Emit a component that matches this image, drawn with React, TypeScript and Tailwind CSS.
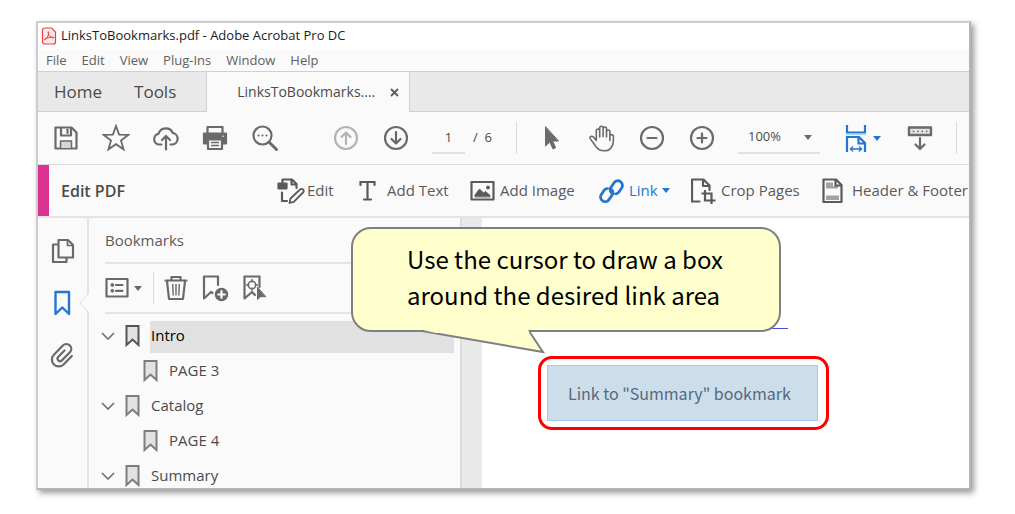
import { ReactNode } from "react";

type IconProps = {
    children: ReactNode,
    className?: string
}

type IconButtonProps = {
    label: string,
    className: string,
    children: ReactNode
}

type ToolProps = {
    label: string,
    icon: ReactNode,
    className: string,
    menu?: boolean
}

type Bookmark = {
    title: string,
    level: number,
    selected?: boolean
}

const menus = ["File", "Edit", "View", "Plug-Ins", "Window", "Help"];

const bookmarks: Bookmark[] = [
    { title: "Intro", level: 0, selected: true },
    { title: "PAGE 3", level: 1 },
    { title: "Catalog", level: 0 },
    { title: "PAGE 4", level: 1 },
    { title: "Summary", level: 0 },
];

// all icons are drawn on a 28 x 28 grid
const Icon = ({ children, className = "" }: IconProps) => (
    <svg viewBox="0 0 28 28" className={"size-7 shrink-0 " + className} fill="none" stroke="currentColor"
        strokeWidth="2.2" strokeLinecap="round" strokeLinejoin="round" aria-hidden="true">
        {children}
    </svg>
);

const Caret = ({ className = "" }: { className?: string }) => (
    <svg viewBox="0 0 8 5" className={"w-2 h-[5px] shrink-0 " + className} fill="currentColor" aria-hidden="true">
        <path d="M0 0h8L4 5z" />
    </svg>
);

const SaveIcon = () => (
    <Icon>
        <path d="M3.5 3.5h16l5 5v16h-21z" />
        <path d="M9 4v7.500h10V4" />
        <path d="M15.500 5.500v3.500" />
        <path d="M8.500 24v-7h11v7" fill="#d6d6d6" strokeWidth="1.500" />
    </Icon>
);

const StarIcon = () => (
    <Icon>
        <path d="M14 2l3.100 8.600 9.100.300-7.200 5.600 2.600 8.800L14 20.200l-7.600 5.100L9 16.500 1.800 10.900l9.100-.300z"
            strokeWidth="1.800" strokeLinejoin="miter" />
    </Icon>
);

const CloudIcon = () => (
    <Icon>
        <path d="M9.500 20.500H7.500a5.400 5.400 0 0 1-1-10.700A7.600 7.600 0 0 1 20.800 9a5.800 5.800 0 0 1-.500 11.500h-1.800" />
        <path d="M14 25.500V12.500M10 16l4-4 4 4" />
    </Icon>
);

const PrintIcon = () => (
    <Icon>
        <path d="M6.500 9V3h15v6" />
        <path d="M3 9.500h22v10h-3V16H6v3.500H3z" fill="currentColor" />
        <path d="M7 15.500h14v9.500H7z" fill="#fafafa" />
        <path d="M10.500 18.500h7M10.500 21.500h7" strokeWidth="1.300" />
        <path d="M22 12.200h.010" stroke="#fafafa" strokeWidth="1.500" />
    </Icon>
);

const SearchIcon = () => (
    <Icon>
        <circle cx="11.500" cy="11.500" r="9" />
        <path d="M18.200 18.200l7.300 7.300" strokeWidth="3" />
        <path d="M7.500 11.500h.010M11.500 11.500h.010M15.500 11.500h.010" />
    </Icon>
);

const UpIcon = () => (
    <Icon>
        <circle cx="14" cy="14" r="11" />
        <path d="M14 20V8.500M9.500 13L14 8.500l4.500 4.500" />
    </Icon>
);

const DownIcon = () => (
    <Icon>
        <circle cx="14" cy="14" r="11" />
        <path d="M14 8v11.500M9.500 15l4.500 4.500 4.500-4.500" />
    </Icon>
);

const PointerIcon = () => (
    <Icon>
        <path d="M7.500 3v19l4.300-4 3.200 7 2.600-1.200-3-6.800h5.600z" fill="currentColor" strokeWidth="1" />
    </Icon>
);

const HandIcon = () => (
    <Icon>
        <path d="M8.300 16.500V6.700a1.700 1.700 0 0 1 3.400 0V13 M11.700 12V3.900a1.700 1.700 0 0 1 3.400 0V12.500 M15.100 12V4.700a1.700 1.700 0 0 1 3.400 0V13 M18.500 13V7.700a1.700 1.700 0 0 1 3.400 0V16.500 M21.900 15.500V12a1.800 1.800 0 0 1 3.500 0v4.500c0 6-3.400 10.300-9.200 10.300-5 0-7.400-2.500-9.200-5.500l-4.800-6.700c-.9-1.700 1.300-3.200 3-1.800l3.100 3.700"
            strokeWidth="1.600" />
    </Icon>
);

const MinusIcon = () => (
    <Icon>
        <circle cx="14" cy="14" r="11" />
        <path d="M9.500 14h9" />
    </Icon>
);

const PlusIcon = () => (
    <Icon>
        <circle cx="14" cy="14" r="11" />
        <path d="M9.500 14h9M14 9.500v9" />
    </Icon>
);

const FitIcon = () => (
    <Icon>
        <path d="M5 1v7.500h18V1" strokeLinecap="butt" strokeLinejoin="miter" />
        <path d="M4 10.500h20" stroke="#b5d3f0" strokeWidth="1.500" strokeLinecap="butt" />
        <path d="M5 28V13h12l6 6v9M16.500 13v6.500H23" strokeLinecap="butt" strokeLinejoin="miter" />
        <path d="M9 25h10" strokeWidth="1.500" />
        <path d="M10.500 22.300L7.800 25l2.700 2.700zM17.500 22.300l2.700 2.700-2.700 2.700z" fill="currentColor" strokeWidth=".5" />
    </Icon>
);

const KeyboardIcon = () => (
    <Icon>
        <path d="M3 3.500h22v7.500H3z" fill="#e4e4e4" strokeWidth="2.400" />
        <path d="M7.500 7.300h.010M12 7.300h.010M16.300 7.300h.010M20.700 7.300h.010" strokeWidth="1.800" />
        <path d="M14 14v10.500M9.500 20.500L14 25l4.500-4.500" />
    </Icon>
);

const EditIcon = () => (
    <Icon>
        <path d="M5.500 6V2.500h9.500l4.500 4.500v4M14.500 3v4.500h5" />
        <path d="M1.500 6.500h8v5h-8z" fill="currentColor" />
        <path d="M5 15.500V24h5" />
        <path d="M12.500 26l1-4.500L23 12.500a1.900 1.900 0 0 1 3 3L16.800 24.900z" strokeWidth="1.800" />
    </Icon>
);

const TextIcon = () => (
    <Icon>
        <path d="M3.500 8V5h14v3M10.500 5v17M7 22.500h7" strokeLinejoin="miter" />
    </Icon>
);

const ImageIcon = () => (
    <Icon>
        <g transform="translate(-1.500)">
            <path d="M3 5h22v17.500H3z" />
            <path d="M6.500 19.500v-1.500l4.500-6 4 4 2-1.500 4.500 4v1z" fill="currentColor" strokeWidth="1" />
            <circle cx="19.500" cy="10.500" r="1.500" fill="currentColor" strokeWidth="1" />
        </g>
    </Icon>
);

const LinkIcon = () => (
    <Icon>
        <g strokeWidth="2.800" transform="rotate(-8 14 14) translate(-1.500)">
            <path d="M15.500 16.800c-2.600-1-3.600-4.300-1.800-6.400l4-4.400a4.600 4.600 0 0 1 6.800 6.200l-3.300 3.700a4 4 0 0 1-3 1.300" />
            <path d="M12.500 11.200c2.600 1 3.600 4.300 1.800 6.400l-4 4.400a4.600 4.600 0 0 1-6.800-6.200l3.300-3.700a4 4 0 0 1 3-1.300" />
        </g>
    </Icon>
);

const CropIcon = () => (
    <Icon>
        <g transform="translate(-2.500)">
            <path d="M11 24.500H3.500v-22H15l6 6V13M14.500 3v6H21" />
            <path d="M13 16.500h10V27M16.500 13v10.500h10.500" strokeLinecap="butt" strokeLinejoin="miter" />
        </g>
    </Icon>
);

const HeaderIcon = () => (
    <Icon>
        <g transform="translate(-3.500)">
            <path d="M5 2.500h12.500l5.500 5.500v17H5z" />
            <path d="M7.500 5.500h7v3.500h5v2.500h-12zM7.500 18.500h13V23h-13z" fill="#a2a2a2" stroke="none" />
            <path d="M17 3v5.500h5.500" />
        </g>
    </Icon>
);

const PagesIcon = () => (
    <Icon>
        <path d="M8.500 7.500H4v17.500h13.500v-4" />
        <path d="M9.500 3h9.500l5 5v12.500H9.500z" />
        <path d="M18.500 3.500V8.500h5" strokeWidth="1.700" />
    </Icon>
);

const RibbonIcon = () => (
    <Icon>
        <path d="M6.500 3h13.500v22L13.300 18.500 6.500 25z" strokeWidth="2.400" />
    </Icon>
);

const ClipIcon = () => (
    <Icon>
        <path d="M16.500 9.500L10.300 15.800a2.500 2.500 0 0 0 3.600 3.600l8-8.200a4.800 4.800 0 0 0-7-6.700l-9 9.300a6.800 6.800 0 0 0 9.700 9.600l8.200-8.400"
            transform="translate(-1)" />
    </Icon>
);

const OptionsIcon = () => (
    <Icon>
        <path d="M3.500 5h21v17.500h-21z" />
        <circle cx="9.300" cy="11" r="1.400" fill="currentColor" strokeWidth="1" />
        <circle cx="9.300" cy="16.800" r="1.400" fill="currentColor" strokeWidth="1" />
        <path d="M13 11h6.500M13 16.800h6.500" />
    </Icon>
);

const TrashIcon = () => (
    <Icon>
        <path d="M3.500 6.500h21M9.500 6V3h9v3M5 7l2 18h14l2-18" />
        <path d="M10.700 10.500l.5 10.500M14 10.500V21M17.300 10.500l-.5 10.500" strokeWidth="1.400" />
    </Icon>
);

const AddBookmarkIcon = () => (
    <Icon>
        <path d="M16 11V2.500H2v22l7-6.500 1.500 1" />
        <circle cx="19.500" cy="20.500" r="6" fill="currentColor" strokeWidth="1.500" />
        <path d="M16.200 20.500h6.600M19.500 17.200v6.600" stroke="#fafafa" />
    </Icon>
);

const FindBookmarkIcon = () => (
    <Icon>
        <path d="M19.500 13V2.500h-15v22l7.500-6.500 3 3" />
        <circle cx="12" cy="11" r="3.800" strokeWidth="1.500" />
        <path d="M12 5.500v2.500M12 14v2.500M6.500 11h2.500M15 11h2.500" strokeWidth="1.300" />
        <path d="M17.500 13.500v12l3-2.800h5z" fill="currentColor" strokeWidth="1" />
    </Icon>
);

const IconButton = ({ label, className, children }: IconButtonProps) => (
    <button type="button" aria-label={label} title={label} className={"flex items-center justify-center shrink-0 " + className}>
        {children}
    </button>
);

const Tool = ({ label, icon, className, menu }: ToolProps) => (
    <button type="button" className={"flex items-center shrink-0 h-full " + className}>
        <span className="w-[30px]">{icon}</span>
        <span>{label}</span>
        {menu && <Caret className="ml-1" />}
    </button>
);

const TitleBar = () => (
    <header>
        <div className="flex items-center gap-1 h-[26px] pl-[3px] bg-white text-[13px] text-[#1c1c1c]">
            <svg viewBox="0 0 16 18" className="w-4 h-[18px]" fill="none" stroke="#ee3a3a" aria-hidden="true">
                <path d="M1.500 3a2 2 0 0 1 2-2h7L14.500 5v10a2 2 0 0 1-2 2h-9a2 2 0 0 1-2-2z" fill="#fdecec" strokeWidth="1.200" />
                <path d="M3.500 12.800c2.500-1 4-4 4.300-7.300.100-1.200-1-1-.8.200.5 3 2.500 5 5 5.300 1.300.100 1-1 0-1-3 0-6 1-8 2-.8.500-.8 1-.5.800z" />
            </svg>
            <h1 className="truncate">LinksToBookmarks.pdf - Adobe Acrobat Pro DC</h1>
        </div>
        <nav className="flex items-center gap-[15px] h-[22px] pt-px px-2 bg-[#fafafa] text-[13px] text-[#606060]">
            {menus.map((menu) => (
                <button type="button" key={menu}>{menu}</button>
            ))}
        </nav>
    </header>
);

const Tabs = () => (
    <div className="flex h-[41px] border-y border-[#d0d0d0] bg-[#e9e9e9] text-[#4b4b4b]">
        <button type="button" className="pl-4 pr-8 text-[17px]">Home</button>
        <button type="button" className="pr-[30px] text-[17px]">Tools</button>
        <div className="flex items-center gap-[15px] h-10 shrink-0 pl-[30px] pr-2.5 border-x border-[#d0d0d0] bg-[#fafafa] text-sm">
            <button type="button">LinksToBookmarks....</button>
            <button type="button" aria-label="Close tab">
                <svg viewBox="0 0 9 9" className="size-[9px]" stroke="#5a5a5a" strokeWidth="1.800" aria-hidden="true">
                    <path d="M1 1l7 7M8 1L1 8" />
                </svg>
            </button>
        </div>
    </div>
);

const Toolbar = () => (
    <div className="flex items-center h-[54px] pl-[3px] border-b border-[#dadada] bg-[#fafafa] text-[13px] text-[#6a6a6a]">
        <IconButton label="Save" className="w-[50px]"><SaveIcon /></IconButton>
        <IconButton label="Star" className="w-[50px]"><StarIcon /></IconButton>
        <IconButton label="Upload" className="w-[50px]"><CloudIcon /></IconButton>
        <IconButton label="Print" className="w-12"><PrintIcon /></IconButton>
        <IconButton label="Find" className="w-[52px]"><SearchIcon /></IconButton>
        <IconButton label="Previous page" className="w-[50px] ml-[30px] text-[#b3b3b3]"><UpIcon /></IconButton>
        <IconButton label="Next page" className="w-[50px]"><DownIcon /></IconButton>
        <input aria-label="Page number" defaultValue="1"
            className="w-[33px] h-8 ml-[11px] shrink-0 border-b-2 border-[#e2e2e2] text-center text-[#4b4b4b]" />
        <span className="w-[51px] pl-2 shrink-0 whitespace-pre text-[#4b4b4b]">/  6</span>
        <span className="w-px h-8 mr-2.5 shrink-0 bg-[#dadada]" />
        <IconButton label="Select" className="w-[50px]"><PointerIcon /></IconButton>
        <IconButton label="Pan" className="w-[50px]"><HandIcon /></IconButton>
        <IconButton label="Zoom out" className="w-[50px]"><MinusIcon /></IconButton>
        <IconButton label="Zoom in" className="w-[50px]"><PlusIcon /></IconButton>
        <div className="flex items-center w-[82px] h-8 ml-[11px] px-2 shrink-0 border-b-2 border-[#e2e2e2]">
            <select aria-label="Zoom" className="grow appearance-none px-0.5 text-[#4b4b4b]">
                <option>100%</option>
            </select>
            <Caret />
        </div>
        <IconButton label="Fit width" className="gap-[3px] ml-[22px] text-[#2476d0]"><FitIcon /><Caret /></IconButton>
        <IconButton label="Read mode" className="w-[50px] ml-3.5"><KeyboardIcon /></IconButton>
        <span className="w-px h-8 ml-[11px] shrink-0 bg-[#dadada]" />
    </div>
);

const EditBar = () => (
    <div className="flex items-center h-[54px] border-b-2 border-[#e4e4e4] bg-[#fafafa] text-[15px] text-[#5a5a5a] whitespace-nowrap">
        <div className="self-stretch w-[11px] shrink-0 bg-[#da3490]" />
        <h2 className="w-[228px] pl-3 shrink-0 text-base font-semibold text-[#4b4b4b]">Edit PDF</h2>
        <Tool label="Edit" icon={<EditIcon />} className="w-20" />
        <Tool label="Add Text" icon={<TextIcon />} className="w-[113px]" />
        <Tool label="Add Image" icon={<ImageIcon />} className="w-[129px]" />
        <Tool label="Link" icon={<LinkIcon />} className="w-[92px] text-[#2476d0]" menu />
        <Tool label="Crop Pages" icon={<CropIcon />} className="w-[131px]" />
        <Tool label="Header &amp; Footer" icon={<HeaderIcon />} className="" />
    </div>
);

const SideRail = () => (
    <nav className="relative flex flex-col w-[51px] shrink-0 pt-[7px] border-r-2 border-[#e4e4e4] text-[#6a6a6a]">
        <IconButton label="Page thumbnails" className="h-[52px]"><PagesIcon /></IconButton>
        <IconButton label="Bookmarks" className="h-[52px] text-[#2476d0]"><RibbonIcon /></IconButton>
        <IconButton label="Attachments" className="h-[52px]"><ClipIcon /></IconButton>
        <svg viewBox="0 0 10 20" className="absolute -right-0.5 top-[75px] w-2.5 h-5" fill="#fafafa" stroke="#dcdcdc" aria-hidden="true">
            <path d="M10 0L1 10l9 10" />
        </svg>
    </nav>
);

const BookmarkRow = ({ item }: { item: Bookmark }) => (
    <li className={"flex items-center h-[35px] " + (item.level > 0 ? "pl-9" : "")}>
        {item.level == 0 && <button type="button" aria-label={"Collapse " + item.title} className="w-[18px] shrink-0 text-[#6e6e6e]">
            <svg viewBox="0 0 14 8" className="w-3.5 h-2" fill="none" stroke="currentColor" strokeWidth="1.600" aria-hidden="true">
                <path d="M1 1l6 6 6-6" />
            </svg>
        </button>}
        <svg viewBox="0 0 15 22" className={"w-[15px] h-[22px] ml-1.5 shrink-0 " + (item.selected ? "text-[#555555]" : "text-[#7d7d7d]")}
            fill="#e2e2e2" stroke="currentColor" strokeWidth="2" aria-hidden="true">
            <path d="M1.500 1h12v19l-6-5.500-6 5.500z" />
        </svg>
        <button type="button" className={"self-end h-8 grow pb-1 pl-px ml-2.5 text-left " + (item.selected ? "bg-[#e1e1e1] text-black" : "text-[#4b4b4b]")}>
            {item.title}
        </button>
    </li>
);

const BookmarksPanel = () => (
    <section className="w-[371px] shrink-0 pl-4 pr-1.5 text-[15px]">
        <h2 className="h-[46px] leading-[44px] border-b-2 border-[#e4e4e4] text-[#5a5a5a]">Bookmarks</h2>
        <div className="flex items-center h-[50px] border-b-2 border-[#e4e4e4] text-[#6a6a6a]">
            <IconButton label="Options" className="gap-[3px] -ml-0.5"><OptionsIcon /><Caret /></IconButton>
            <span className="w-px h-8 mx-2 ml-[11px] bg-[#dadada]" />
            <IconButton label="Delete bookmark" className="w-7"><TrashIcon /></IconButton>
            <IconButton label="New bookmark" className="w-7 ml-3"><AddBookmarkIcon /></IconButton>
            <IconButton label="Find current bookmark" className="w-7 ml-2.5"><FindBookmarkIcon /></IconButton>
        </div>
        <ul className="pt-1 -ml-1">
            {bookmarks.map((item) => (
                <BookmarkRow key={item.title} item={item}></BookmarkRow>
            ))}
        </ul>
    </section>
);

const Callout = () => (
    <aside className="absolute left-[313px] top-[9px] w-[430px] pl-[54px] pt-3 pb-[17px] border-2 border-[#7f7f7f] rounded-[20px] bg-[#feffcc] font-['Noto_Sans_CJK_SC',sans-serif] text-2xl leading-9 text-black">
        <p>Use the cursor to draw a box<br />around the desired link area</p>
        <svg viewBox="0 0 124 26" className="absolute left-[69px] -bottom-[24px] w-[124px] h-[26px]" aria-hidden="true">
            <path d="M0 3L121 24 107 3" fill="#feffcc" stroke="#7f7f7f" strokeWidth="2" />
            <path d="M2 0h103l2.500 5H14L2 2.300z" fill="#feffcc" />
        </svg>
    </aside>
);

const Page = () => (
    <main className="grow min-w-0 pl-14 pt-[110px] bg-white">
        <div className="w-[250px] h-px bg-[#4a4ae8]" />
        <div className="inline-block mt-[27px] py-1.5 pl-1.5 pr-2 border-[3px] border-[#ff0000] rounded-[14px]">
            <a href="#summary" className="block w-[271px] py-[11px] pl-5 border border-[#a7cbe3] bg-[#ccdeea] font-['Noto_Sans_CJK_SC',sans-serif] text-base leading-8 text-[#56687f]">
                Link to "Summary" bookmark
            </a>
        </div>
    </main>
);

const App = () => {
    return (
        <div className="flex h-screen pt-[21px] pr-11 pb-6 pl-9 bg-white font-['Open_Sans','Noto_Sans',sans-serif]">
            <div className="flex flex-col grow min-w-0 overflow-hidden border-2 border-[#cccccc] border-r-[#b4b4b4] border-b-[#b4b4b4] shadow-[3px_3px_6px_rgba(0,0,0,0.4)]">
                <TitleBar />
                <Tabs />
                <Toolbar />
                <EditBar />
                <div className="relative flex grow min-h-0 bg-[#fafafa]">
                    <SideRail />
                    <BookmarksPanel />
                    <div className="w-[22px] shrink-0 border-l-2 border-[#dcdcdc] bg-[#e9e9e9]" />
                    <Page />
                    <Callout />
                </div>
            </div>
        </div>
    );
}

export default App;
